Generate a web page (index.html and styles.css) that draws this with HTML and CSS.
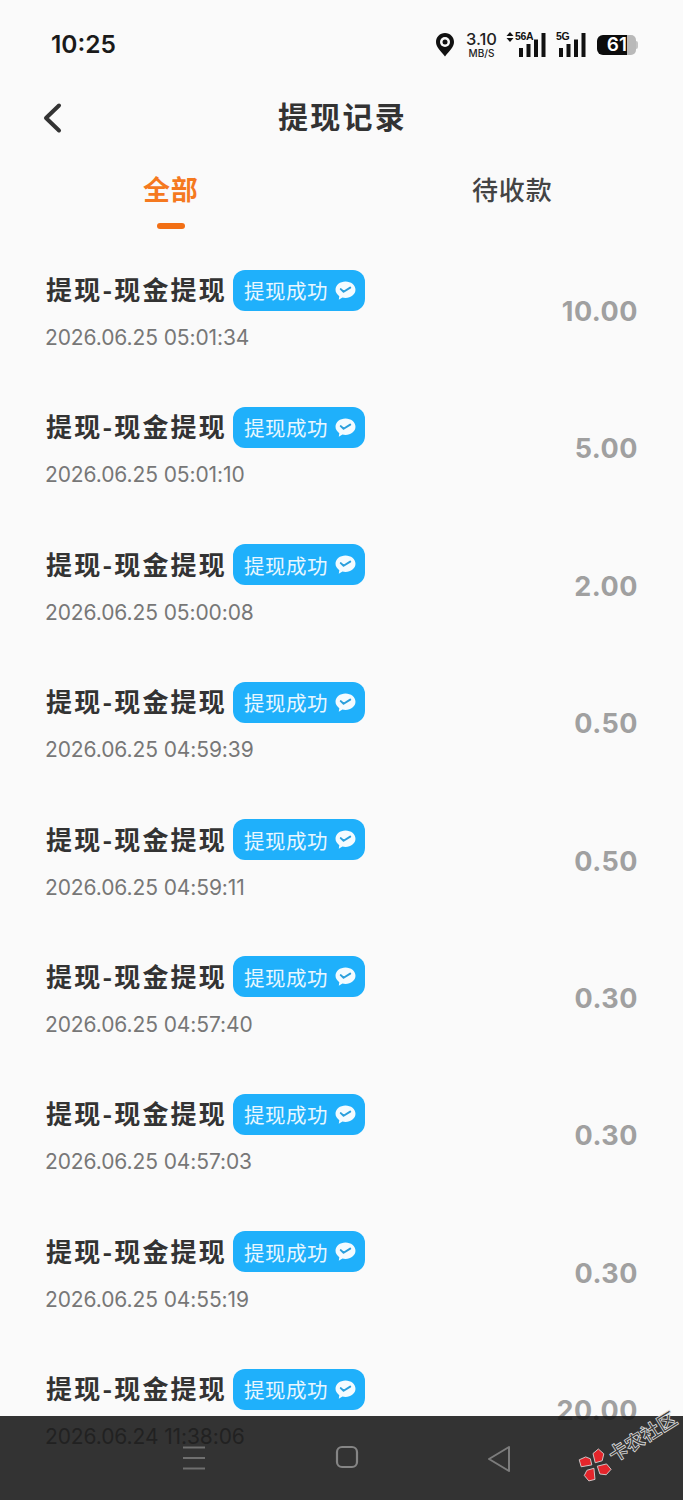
FILE: index.html
```html
<!DOCTYPE html>
<html lang="zh">
<head>
<meta charset="utf-8">
<title>提现记录</title>
<link rel="stylesheet" href="styles.css">
</head>
<body>
<svg class="defs" width="0" height="0" aria-hidden="true">
  <symbol id="wx" viewBox="0 0 20 20">
    <path d="M10 1.500c5.200 0 9.500 3.400 9.500 7.800s-4.300 7.800-9.500 7.800c-1 0-2-.1-2.900-.4L3.600 18.800l.5-3.400C2 13.900.5 11.800.5 9.300.5 4.900 4.800 1.500 10 1.500z" fill="#f4fbff"/>
    <path d="M5.500 8.700l2.700 2.500 6.300-3.900" fill="none" stroke="#2a9fdc" stroke-width="1.900" stroke-linecap="round" stroke-linejoin="round"/>
  </symbol>
</svg>
<div class="page">
  <header class="status">
    <span class="time">10:25</span>
    <div class="status-right">
      <svg class="pin" width="20" height="26" viewBox="0 0 20 26"><path d="M10 1C4.800 1 1 5 1 10c0 5.500 5 9 9 14.500C14 19 19 15.500 19 10 19 5 15.200 1 10 1z" fill="#111"/><circle cx="10" cy="10" r="5" fill="#fafafa"/><circle cx="10" cy="10" r="2.500" fill="#111"/></svg>
      <div class="speed"><span class="speed-num">3.10</span><span class="speed-unit">MB/S</span></div>
      <div class="sig sig-a">
        <svg class="sig-arrows" width="8" height="10" viewBox="0 0 8 10"><path d="M4 0l3.500 4H.5zM4 10l3.500-4H.5z" fill="#111"/></svg>
        <span class="sig-label sig-label-a">56A</span>
        <svg width="28" height="24" viewBox="0 0 28 24"><path d="M1 15h4v9H1zM8.500 11h4v13h-4zM16 6.500h4V24h-4zM23.500 0h4v24h-4z" fill="#111"/></svg>
      </div>
      <div class="sig sig-b">
        <span class="sig-label">5G</span>
        <svg width="28" height="24" viewBox="0 0 28 24"><path d="M1 15h4v9H1zM8.500 11h4v13h-4zM16 6.500h4V24h-4zM23.500 0h4v24h-4z" fill="#111"/></svg>
      </div>
      <div class="battery"><span class="battery-fill">61</span><span class="battery-rest"></span><span class="battery-tip"></span></div>
    </div>
  </header>

  <nav class="titlebar">
    <svg class="back" width="22" height="32" viewBox="0 0 22 32"><path d="M18 3.500L5 16l13 12.500" fill="none" stroke="#333" stroke-width="4" stroke-linecap="round" stroke-linejoin="round"/></svg>
    <h1 class="title">提现记录</h1>
  </nav>

  <div class="tabs">
    <div class="tab tab-active">全部<span class="tab-line"></span></div>
    <div class="tab">待收款</div>
  </div>

  <ul class="list">
    <li class="row"><div class="info"><div class="head"><span class="name">提现-现金提现</span><span class="badge">提现成功<svg class="wx" width="21" height="21"><use href="#wx"/></svg></span></div><div class="date">2026.06.25 05:01:34</div></div><div class="amount">10.00</div></li>
    <li class="row"><div class="info"><div class="head"><span class="name">提现-现金提现</span><span class="badge">提现成功<svg class="wx" width="21" height="21"><use href="#wx"/></svg></span></div><div class="date">2026.06.25 05:01:10</div></div><div class="amount">5.00</div></li>
    <li class="row"><div class="info"><div class="head"><span class="name">提现-现金提现</span><span class="badge">提现成功<svg class="wx" width="21" height="21"><use href="#wx"/></svg></span></div><div class="date">2026.06.25 05:00:08</div></div><div class="amount">2.00</div></li>
    <li class="row"><div class="info"><div class="head"><span class="name">提现-现金提现</span><span class="badge">提现成功<svg class="wx" width="21" height="21"><use href="#wx"/></svg></span></div><div class="date">2026.06.25 04:59:39</div></div><div class="amount">0.50</div></li>
    <li class="row"><div class="info"><div class="head"><span class="name">提现-现金提现</span><span class="badge">提现成功<svg class="wx" width="21" height="21"><use href="#wx"/></svg></span></div><div class="date">2026.06.25 04:59:11</div></div><div class="amount">0.50</div></li>
    <li class="row"><div class="info"><div class="head"><span class="name">提现-现金提现</span><span class="badge">提现成功<svg class="wx" width="21" height="21"><use href="#wx"/></svg></span></div><div class="date">2026.06.25 04:57:40</div></div><div class="amount">0.30</div></li>
    <li class="row"><div class="info"><div class="head"><span class="name">提现-现金提现</span><span class="badge">提现成功<svg class="wx" width="21" height="21"><use href="#wx"/></svg></span></div><div class="date">2026.06.25 04:57:03</div></div><div class="amount">0.30</div></li>
    <li class="row"><div class="info"><div class="head"><span class="name">提现-现金提现</span><span class="badge">提现成功<svg class="wx" width="21" height="21"><use href="#wx"/></svg></span></div><div class="date">2026.06.25 04:55:19</div></div><div class="amount">0.30</div></li>
    <li class="row"><div class="info"><div class="head"><span class="name">提现-现金提现</span><span class="badge">提现成功<svg class="wx" width="21" height="21"><use href="#wx"/></svg></span></div><div class="date">2026.06.24 11:38:06</div></div><div class="amount">20.00</div></li>
  </ul>

  <div class="navbar">
    <svg width="26" height="26" viewBox="0 0 26 26"><path d="M2 2.500h22M2 13h22M2 23.500h22" stroke="#6f6f6f" stroke-width="2.200" fill="none"/></svg>
    <svg width="24" height="24" viewBox="0 0 24 24"><rect x="2" y="2" width="20" height="20" rx="5" stroke="#858585" stroke-width="2.200" fill="none"/></svg>
    <svg width="24" height="28" viewBox="0 0 24 28"><path d="M22 2L2 14l20 12z" stroke="#7c7c7c" stroke-width="2" stroke-linejoin="round" fill="none"/></svg>
  </div>

  <div class="watermark">
    <svg class="wm-logo" width="32" height="32" viewBox="0 0 32 32"><g fill="#e4252b" stroke="#d8d8d8" stroke-width=".8"><path d="M14 14L4 10l2-7 7 1 3 4z"/><path d="M18 14l3-9 7-1 2 7-5 5z"/><path d="M14 18L9 28l-6-2-1-7 5-3z"/><path d="M18 18l9 3 1 7-7 2-5-4z"/></g></svg>
    <span class="wm-text">卡农社区</span>
  </div>
</div>
</body>
</html>
```
FILE: styles.css
```css
* { box-sizing: border-box; margin: 0; padding: 0; }
html, body { width: 683px; height: 1500px; overflow: hidden; }
body { background: #fafafa; color: #333; font-family: "Noto Sans CJK SC", "Noto Sans", sans-serif; }
.defs { position: absolute; }
.page { position: relative; width: 683px; height: 1500px; overflow: hidden; }

.status { height: 88px; padding: 28px 45px 0 51px; display: flex; justify-content: space-between; align-items: flex-start; }
.time { font: 600 24.500px/33px Inter, sans-serif; color: #1a1a1a; }
.status-right { display: flex; align-items: center; height: 34px; }
.pin { margin-right: 10px; }
.speed { display: flex; flex-direction: column; align-items: center; gap: 1px; width: 33px; margin-right: 8px; color: #222; font-family: Inter, sans-serif; }
.speed-num { font-size: 16.500px; line-height: 15px; font-weight: 500; }
.speed-unit { font-size: 10px; line-height: 10px; font-weight: 500; }
.sig { position: relative; width: 40px; height: 24px; display: flex; justify-content: flex-end; }
.sig-a { width: 40px; margin-right: 10px; }
.sig-b { width: 30px; margin-right: 11px; }
.sig-arrows { position: absolute; left: 0; top: -1px; }
.sig-label { position: absolute; left: 0; top: -3px; font: 700 10.500px/12px "Liberation Sans", sans-serif; letter-spacing: -.4px; color: #111; white-space: nowrap; }
.sig-label-a { left: 9px; }
.battery { display: flex; align-items: center; height: 20px; }
.battery-fill { width: 30px; height: 20px; background: #0c0c0c; color: #fff; border-radius: 6px 0 0 6px; font: 600 19px/20px Inter, sans-serif; text-align: right; }
.battery-rest { width: 9px; height: 20px; background: #b9b9b9; border-radius: 0 5px 5px 0; }
.battery-tip { width: 2px; height: 8px; background: #c4c4c4; border-radius: 0 2px 2px 0; }

.titlebar { position: relative; height: 60px; padding: 0 0 6px 2px; display: flex; justify-content: center; align-items: center; }
.back { position: absolute; left: 41px; top: 14px; }
.title { font-size: 30px; font-weight: 700; letter-spacing: 2.200px; line-height: 54px; color: #333; }

.tabs { height: 100px; display: flex; }
.tab { position: relative; width: 342px; padding-top: 22px; text-align: center; font-size: 26px; line-height: 38px; font-weight: 500; color: #444; letter-spacing: .8px; }
.tab-active { color: #f5791f; font-size: 27px; font-weight: 700; }
.tab-line { position: absolute; left: 157px; top: 75px; width: 28px; height: 6px; border-radius: 3px; background: #f26f14; }

.list { list-style: none; height: 1270px; padding-top: 22px; }
.row { height: 137.400px; padding: 0 46px; display: flex; justify-content: space-between; align-items: flex-start; }
.info { display: flex; flex-direction: column; }
.head { display: flex; align-items: center; height: 40px; }
.name { font-size: 26px; font-weight: 700; letter-spacing: 2.200px; color: #333; line-height: 38px; padding-bottom: 2px; margin-right: 6px; white-space: nowrap; }
.badge { display: flex; align-items: center; height: 41px; width: 132px; padding-left: 11px; border-radius: 12px; background: #1fb0fb; color: #e8f7ff; font-size: 20.500px; letter-spacing: .5px; white-space: nowrap; }
.wx { margin-left: 7px; }
.date { margin-top: 13px; font: 400 21px/30px Inter, sans-serif; color: #777; letter-spacing: -.1px; margin-left: -1px; white-space: nowrap; }
.amount { margin-top: 23px; margin-right: -1px; font: 700 27px/38px Inter, sans-serif; color: #a0a0a0; letter-spacing: .5px; }

.navbar { position: absolute; left: 0; bottom: 0; width: 683px; height: 84px; padding: 0 172px 0 181px; display: flex; justify-content: space-between; align-items: flex-start; background: rgba(21, 21, 21, .87); }
.navbar svg { margin-top: 29px; }
.watermark { position: absolute; left: 581px; top: 1458px; display: flex; align-items: center; transform: rotate(-32deg); transform-origin: 0 50%; }
.wm-text { font-size: 19px; font-weight: 700; line-height: 28px; margin-left: 2px; color: #3a3a3a; -webkit-text-stroke: .8px #ddd; white-space: nowrap; }
```
